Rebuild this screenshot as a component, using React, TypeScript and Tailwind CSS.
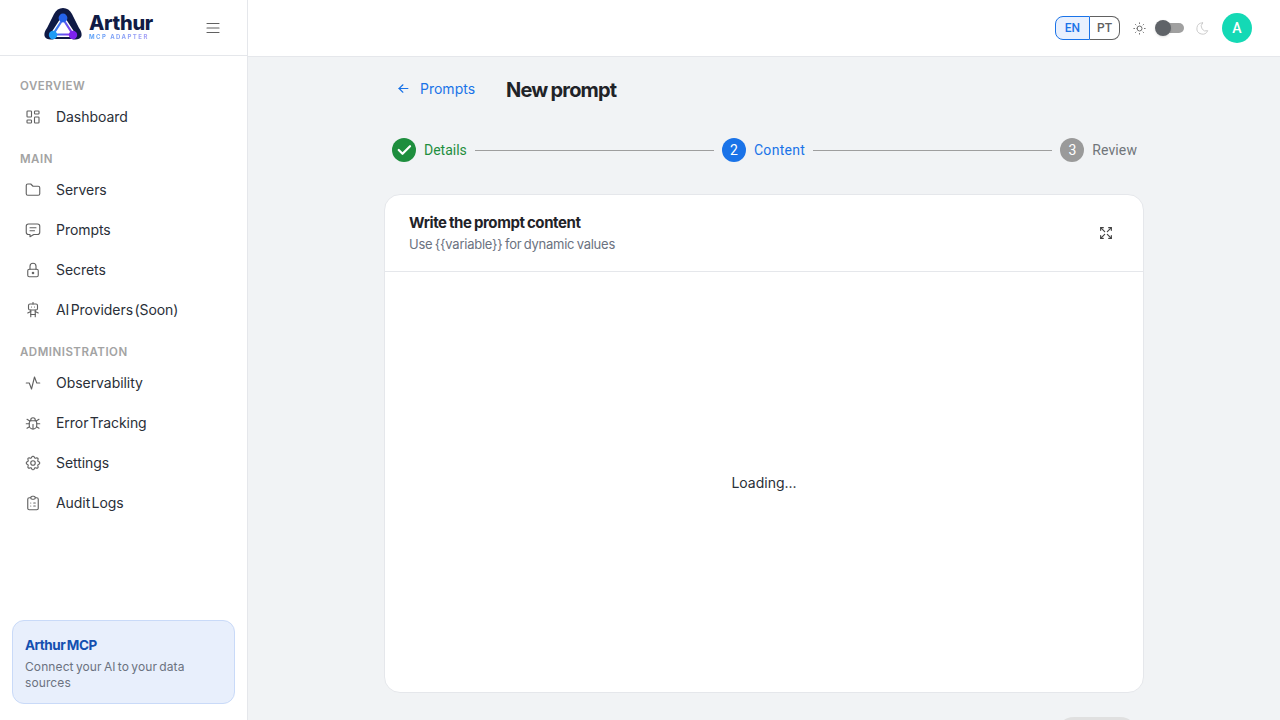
import type { ReactNode } from 'react';
import {
  TbLayoutDashboard,
  TbFolder,
  TbMessage,
  TbLock,
  TbRobot,
  TbActivity,
  TbBug,
  TbSettings,
  TbClipboardList,
  TbMenu2,
  TbSun,
  TbMoon,
  TbArrowLeft,
  TbArrowsMaximize,
  TbCheck,
} from 'react-icons/tb';

const sans = "font-['Inter',sans-serif]";
const roboto = "font-['Roboto',sans-serif]";

const sections = [
  { title: 'OVERVIEW', items: [{ label: 'Dashboard', icon: TbLayoutDashboard }] },
  {
    title: 'MAIN',
    items: [
      { label: 'Servers', icon: TbFolder },
      { label: 'Prompts', icon: TbMessage },
      { label: 'Secrets', icon: TbLock },
      { label: 'AI Providers (Soon)', icon: TbRobot },
    ],
  },
  {
    title: 'ADMINISTRATION',
    items: [
      { label: 'Observability', icon: TbActivity },
      { label: 'Error Tracking', icon: TbBug },
      { label: 'Settings', icon: TbSettings },
      { label: 'Audit Logs', icon: TbClipboardList },
    ],
  },
];

const Logo = () => (
  <div className="flex items-center gap-[7px]">
    <svg width="38" height="32" viewBox="0 0 38 32" className="-mt-[8px]">
      <defs>
        <linearGradient id="tri" x1="0" y1="0" x2="1" y2="0.3">
          <stop offset="0" stopColor="#1d9bf5" />
          <stop offset="1" stopColor="#7c3aed" />
        </linearGradient>
      </defs>
      <path
        d="M0.5 28 C0 25 1 23 3 20 L10 6 C12 2 15 0 19 0 C23 0 26 2 28 6 L35 20 C37 23 38 25 37.5 28 C36 32 31 32 28 31 L10 31 C7 32 2 32 0.5 28 Z"
        fill="#0f1a45"
      />
      <path d="M19 11 L29 26.5 L9 26.5 Z" fill="#fff" stroke="#fff" strokeWidth="5" strokeLinejoin="round" />
      <path d="M19 11 L29 26.5 L9 26.5 Z" fill="#fff" stroke="url(#tri)" strokeWidth="2.2" />
      <circle cx="19" cy="10" r="4.4" fill="#2563eb" />
      <circle cx="9" cy="27" r="4.2" fill="#1d9bf5" />
      <circle cx="29" cy="27" r="4.2" fill="#7c22ee" />
      <path d="M10 31 L28 31 L28 32 L10 32 Z" fill="#fff" />
    </svg>
    <div className="-mt-[3px] flex flex-col">
      <span className={`${sans} text-[20px] font-extrabold leading-[20px] tracking-[-0.3px] text-[#101b45]`}>Arthur</span>
      <span className={`${sans} bg-gradient-to-r from-[#4f9df7] to-[#a99cf5] bg-clip-text text-[6px] font-bold leading-[7px] tracking-[1.45px] text-transparent`}>
        MCP ADAPTER
      </span>
    </div>
  </div>
);

const NavItem = ({ label, icon: Icon }: { label: string; icon: typeof TbFolder }) => (
  <div className="flex h-10 items-center gap-[14px] pl-3">
    <Icon size={18} strokeWidth={1.5} className="shrink-0 text-[#616161]" />
    <span className="-mt-[1px] text-[14px] tracking-[-0.05px] [word-spacing:-2.5px] text-[#2a2f38]">{label}</span>
  </div>
);

const Sidebar = () => (
  <aside className={`${sans} flex h-full w-[248px] shrink-0 flex-col border-r border-[#e5e7eb] bg-white`}>
    <div className="flex h-[56px] shrink-0 items-center border-b border-[#e5e7eb] pl-[44px] pr-[25px]">
      <Logo />
      <TbMenu2 size={18} strokeWidth={1.5} className="ml-auto text-[#616161]" />
    </div>
    <nav className="flex flex-col gap-3 px-3 pt-5">
      {sections.map((section) => (
        <div key={section.title}>
          <div className="mb-px flex h-5 items-center pl-2 pt-[2px] text-[11.5px] font-semibold tracking-[0.5px] text-[#a3a3a3]">
            {section.title}
          </div>
          {section.items.map((item) => (
            <NavItem key={item.label} {...item} />
          ))}
        </div>
      ))}
    </nav>
    <div className="mx-3 mb-4 mt-auto h-[84px] rounded-xl border border-[#c9daf8] bg-[#e8effc] px-3 pt-[14px]">
      <div className="text-[13.5px] font-bold leading-5 tracking-[-0.5px] [word-spacing:-1px] text-[#1450b0]">Arthur MCP</div>
      <div className="mt-1 text-[12px] leading-4 tracking-[0.1px] [word-spacing:-1.2px] text-[#6b7280]">Connect your AI to your data sources</div>
    </div>
  </aside>
);

const TopBar = () => (
  <header className="flex h-[57px] shrink-0 items-center justify-end border-b border-[#e5e7eb] bg-white pr-[28px]">
    <div className={`${roboto} flex h-6 text-[12px] font-medium`}>
      <span className="flex w-[35px] items-center justify-center rounded-l-lg border border-[#1a73e8] bg-[#e8f0fe] text-[#1a73e8]">EN</span>
      <span className="flex w-[30px] items-center justify-center rounded-r-lg border border-l-0 border-[#616161] text-[#616161]">PT</span>
    </div>
    <TbSun size={15} strokeWidth={1.5} className="ml-[12px] text-[#616161]" />
    <div className="relative ml-[10px] h-[10px] w-[27px] rounded-full bg-[#a0a0a0]">
      <span className="absolute -left-[2px] -top-[3px] h-4 w-4 rounded-full bg-[#5f6368] shadow" />
    </div>
    <TbMoon size={15} strokeWidth={1.5} className="ml-[11px] text-[#c9c9c9]" />
    <div className={`${roboto} ml-[12px] flex h-[30px] w-[30px] items-center justify-center rounded-full bg-[#14d9b5] text-[14px] font-medium text-white`}>
      A
    </div>
  </header>
);

const Step = ({ circle, label, tone, bg }: { circle: ReactNode; label: string; tone: string; bg: string }) => (
  <div className="flex shrink-0 items-center gap-2">
    <span className={`flex h-6 w-6 items-center justify-center rounded-full text-[14px] font-normal text-white ${bg}`}>{circle}</span>
    <span className={`text-[14px] ${tone}`}>{label}</span>
  </div>
);

const Stepper = () => (
  <div className={`${roboto} flex items-center gap-2 pl-2 pr-[7px]`}>
    <Step circle={<TbCheck size={18} strokeWidth={3} />} label="Details" tone="text-[#1e8e3e]" bg="bg-[#1e8e3e]" />
    <div className="h-px flex-1 bg-[#9e9e9e]" />
    <Step circle="2" label="Content" tone="tracking-[0.3px] text-[#1a73e8]" bg="bg-[#1a73e8]" />
    <div className="h-px flex-1 bg-[#9e9e9e]" />
    <Step circle="3" label="Review" tone="tracking-[0.1px] text-[#70757a]" bg="bg-[#9a9a9a]" />
  </div>
);

export default function App() {
  return (
    <div className="flex h-screen w-full overflow-hidden bg-[#f1f3f5]">
      <Sidebar />
      <div className="flex min-w-0 flex-1 flex-col">
        <TopBar />
        <main className="flex-1 overflow-hidden">
          <div className="mx-auto w-[760px]">
            <div className={`${sans} flex h-[66px] items-center pl-3`}>
              <div className="-mt-[4px] flex items-center gap-[9px] text-[14px] text-[#1a73e8]">
                <TbArrowLeft size={15} strokeWidth={1.75} />
                <span>Prompts</span>
              </div>
              <h1 className="ml-[31px] text-[20px] font-bold tracking-[-0.8px] [word-spacing:-1px] text-[#1f2328]">New prompt</h1>
            </div>
            <div className="mt-[15px]">
              <Stepper />
            </div>
            <section className={`${sans} mt-[32px] h-[499px] overflow-hidden rounded-2xl border border-[#e5e7eb] bg-white`}>
              <div className="flex h-[77px] items-center justify-between border-b border-[#e5e7eb] pl-6 pr-[29px]">
                <div>
                  <div className="text-[15px] font-bold leading-[22px] tracking-[-0.4px] [word-spacing:-0.8px] text-[#1f2328]">Write the prompt content</div>
                  <div className="text-[13px] leading-5 tracking-[-0.25px] [word-spacing:-1px] text-[#6b7280]">{'Use {{variable}} for dynamic values'}</div>
                </div>
                <TbArrowsMaximize size={16} strokeWidth={1.75} className="text-[#424242]" />
              </div>
              <div className="flex h-[421px] items-center justify-center text-[14px] text-[#2a2f38]">Loading...</div>
            </section>
            <div className="mt-6 flex justify-end pr-[6px]">
              <div className="h-9 w-[82px] rounded-full bg-[#e0e0e0]" />
            </div>
          </div>
        </main>
      </div>
    </div>
  );
}
